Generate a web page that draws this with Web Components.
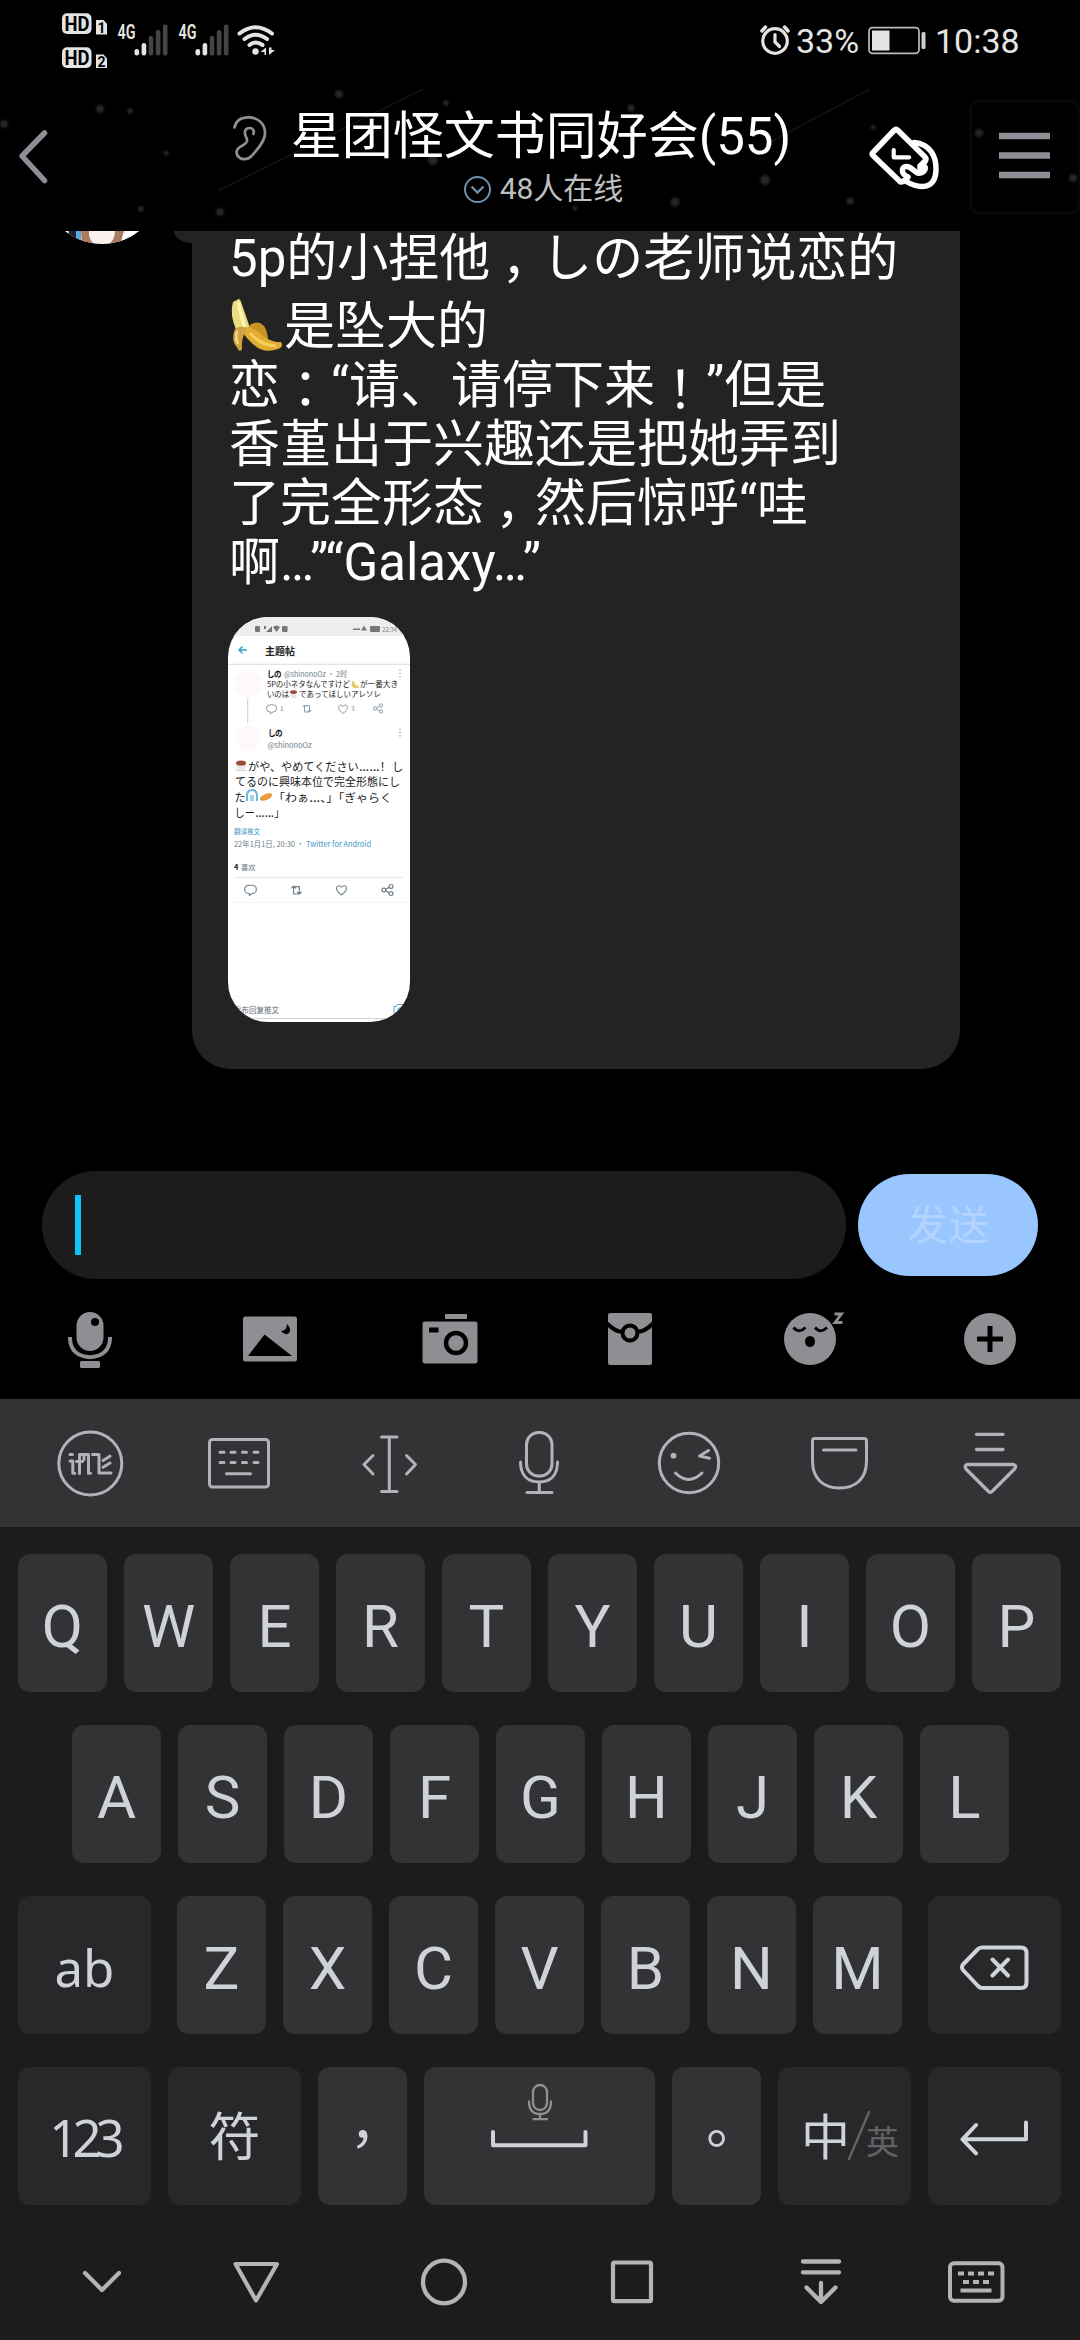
<!DOCTYPE html>
<html lang="zh-CN">
<head>
<meta charset="utf-8">
<title>群聊</title>
<style>
html,body{margin:0;padding:0;background:#000}
body{width:1080px;height:2340px;overflow:hidden;font-family:Roboto,"Noto Sans CJK SC",sans-serif}
</style>
</head>
<body>
<chat-app></chat-app>
<script>
const define = (name, html) => customElements.define(name, class extends HTMLElement {
  constructor() {
    super();
    this.attachShadow({mode: 'open'}).innerHTML = html;
  }
});

/* Icon set: [viewBox, markup]; the view box size is the drawn size. */
const ICONS = {
  signals: ['60 0 220 80', `
    <g fill="#e4e4e4"><rect x="62" y="13.3" width="29.5" height="20.6" rx="5"/><rect x="62" y="47.3" width="29.5" height="20.6" rx="5"/>
    <path d="M96 20h7.500l3.500 4v10.500h-11zM96 54.500h7.500l3.500 4v9.500h-11z"/></g>
    <g font-family="Roboto" font-weight="700" fill="#000"><text x="64.500" y="31" font-size="20" textLength="25" lengthAdjust="spacingAndGlyphs">HD</text><text x="64.500" y="65" font-size="20" textLength="25" lengthAdjust="spacingAndGlyphs">HD</text>
    <text x="97.500" y="33" font-size="14">1</text><text x="97.500" y="67" font-size="14">2</text></g>
    <g font-family="Roboto" font-weight="600" fill="#e4e4e4" font-size="20"><text x="117.500" y="38.500" textLength="18" lengthAdjust="spacingAndGlyphs">4G</text><text x="178.500" y="38.500" textLength="18" lengthAdjust="spacingAndGlyphs">4G</text></g>
    <g id="b"><g fill="#e4e4e4"><rect x="134.500" y="49" width="4.600" height="6.500" rx="2.200"/><rect x="141.600" y="43" width="4.600" height="12.500" rx="2.200"/></g>
    <g fill="#444"><rect x="148.700" y="36" width="4.600" height="19.500" rx="2"/><rect x="155.800" y="30" width="4.600" height="25.500" rx="2"/><rect x="162.900" y="24.500" width="4.600" height="31" rx="2"/></g></g>
    <use href="#b" x="61"/>
    <g fill="none" stroke="#e4e4e4" stroke-width="4" stroke-linecap="round"><path d="M239.500 33.500q16-12.500 32.500 0M244.500 39q11-8.500 22.500 0M249.500 45q6-5 13 0"/></g>
    <circle cx="255.500" cy="51.500" r="3.200" fill="#e4e4e4"/><path d="M266 47.500v7.500h-1.500v-3h-4zM269 47.500v7.500l6-5h-3.500v-2.500z" fill="#e4e4e4"/>`],
  alarm: ['758 20 34 40', `<g fill="none" stroke="#e4e4e4" stroke-linecap="round"><circle cx="774" cy="41" r="12.300" stroke-width="3.200"/><path d="M774 34.500v7.500l4.500 4.500" stroke-width="3.200"/><path d="M761 31l3.500-4M787 31l-3.500-4" stroke-width="3.500"/></g>`],
  battery: ['865 20 64 40', `<rect x="868" y="27.700" width="50" height="25.600" rx="3.500" fill="none" stroke="#bbb" stroke-width="1.700"/><rect x="871" y="30.500" width="17.500" height="20" fill="#e4e4e4"/><rect x="920.500" y="32" width="4" height="17" rx="1.500" fill="#ccc"/>`],
  back: ['0 80 226 151', `<path d="M44.500 133L22 156l22.500 24.500" fill="none" stroke="#8e8e96" stroke-width="5.500" stroke-linecap="round" stroke-linejoin="round"/>`],
  ear: ['226 80 65 151', `<g fill="none" stroke="#8e8e93" stroke-width="2.700" stroke-linecap="round"><path d="M234.500 127.500C236 120 242 117.300 248.500 117.300C258 117.300 265.500 124 265 134C264.500 142 257 150 251.500 156C247.500 160.500 240 160 237.500 155.500C235 151 238 147.500 242.500 145.500C247.500 143 248 140.500 246 137C243.500 131.500 245.500 128 249.500 128C253 128 254.500 130.500 253.500 134"/></g>`],
  chevron: ['463 174 30 30', `<g fill="none" stroke="#7190ad" stroke-width="2"><circle cx="477.500" cy="189.500" r="12.500"/><path d="M471.500 186.500l6 6 6-6" stroke-width="2.300"/></g>`],
  tag: ['791 80 169 151', `<g fill="none" stroke="#fff" stroke-width="5.500" stroke-linejoin="round" stroke-linecap="round"><path d="M903 181.500L900.500 182L873 155.500Q871.500 154 873 152.500L894 130.500Q896 128.500 898 130.500L924.500 156.500Q927 159 925 161.500"/><path d="M914 142.500C930 144 936.500 156 936 170C935.500 188 922 191 904.500 180.500"/><path d="M905 180L908 177C899 173 902 164 909 167C915 170 917 176 923 172C928 168 924 163 920 168M925 161L920 166"/><path d="M893.700 150v7.300h15.500" stroke-width="4.200"/></g>`],
  menu: ['960 80 120 151', `<rect x="970.500" y="101" width="109" height="112" rx="10" fill="none" stroke="#08080a" stroke-width="3"/><path d="M999 136h51M999 155.500h51M999 175h51" stroke="#8e8e96" stroke-width="6.300"/>`],
  banana: ['230 300 55 56', `<path d="M238 303q3-3 4 2q5 14 9 26l-2 6-11-2q-8-18-4-30z" fill="#eddc83"/><path d="M239.500 305q3 17 7 27" stroke="#fff3b0" stroke-width="3.500" fill="none"/><path d="M252 327q14-6 17 14l-4 5q-12-3-17-14z" fill="#c99422"/><path d="M246 330q9 0 18 9q10 7 18 6q3 5-3 7q-14 5-24-4q-9-8-12-14z" fill="#e0ad32"/><path d="M251 336q10 12 26 13" stroke="#f4cf5c" stroke-width="3" fill="none"/><path d="M236 332q7-5 12 0q-6 9-5 20q-2 4-4 0q-8-9-3-20z" fill="#d1a340"/><path d="M238 334q-2 7 1 13" stroke="#eddb8b" stroke-width="2.500" fill="none"/>`],
  voice: ['0 1279 180 120', `<rect x="76.500" y="1312" width="27" height="39" rx="13.500" fill="#8e8e93"/><path d="M70 1337v2q1 17 20 18.200q19-1.200 20-18.200v-2" fill="none" stroke="#8e8e93" stroke-width="4"/><rect x="80" y="1361" width="20" height="7" rx="1.500" fill="#8e8e93"/><circle cx="95" cy="1322" r="4" fill="#000"/>`],
  photo: ['180 1279 180 120', `<rect x="243" y="1316.500" width="54" height="45" rx="2.500" fill="#8e8e93"/><path d="M248 1356l16.500-21.500L292 1356zM287 1324q5 5 2 9q-4 3-8-2q6 0 6-7z" fill="#000"/>`],
  camera: ['360 1279 180 120', `<path d="M445 1314h22v5h-22zM425 1321.500h50q2.500 0 2.500 2.500v37q0 2.500-2.500 2.500h-50q-2.500 0-2.500-2.500v-37q0-2.500 2.500-2.500z" fill="#8e8e93"/><path d="M429 1327.500h9.500v5h-9.500z" fill="#000"/><circle cx="456" cy="1343" r="10" fill="#8e8e93" stroke="#000" stroke-width="4.500"/>`],
  envelope: ['540 1279 180 120', `<rect x="608" y="1313" width="44" height="52" rx="2" fill="#8e8e93"/><path d="M607 1323.500q8 8 15.500 8.500M653 1323.500q-8 8-15.500 8.500" fill="none" stroke="#000" stroke-width="4"/><circle cx="630" cy="1333" r="7.500" fill="#8e8e93" stroke="#000" stroke-width="4"/>`],
  sleepy: ['720 1279 180 120', `<circle cx="810" cy="1339" r="26" fill="#8e8e93"/><g fill="none" stroke="#000" stroke-width="2.800"><path d="M793.500 1327.500q5.500 6.500 12 0M815 1327.500q5.500 6.500 12 0"/></g><ellipse cx="810" cy="1341.500" rx="5" ry="5.500" fill="#000"/><path d="M834.500 1314h7l-6.500 8.500h7.500" fill="none" stroke="#8e8e93" stroke-width="2.800"/>`],
  plus: ['900 1279 180 120', `<circle cx="990" cy="1339" r="26" fill="#8e8e93"/><path d="M990 1326v26M977 1339h26" stroke="#000" stroke-width="5"/>`],
  logo: ['15 1399 150 128', `<g fill="none" stroke="#b1b3ba" stroke-width="3" stroke-linecap="round" stroke-linejoin="round"><circle cx="90.300" cy="1463.500" r="31.500"/><path d="M70 1454.500h2.500M70 1461h2.800v12.300h2M79.500 1473.500v-19h9v18.800h2M76.500 1461.500h6M84 1454.500v5M92.500 1454.500h6.500v18.500h12M103 1460.500l7-4.300M103 1467.300l7-4.300"/></g>`],
  kbd: ['165 1399 150 128', `<g fill="none" stroke="#b1b3ba" stroke-width="3" stroke-linecap="round"><rect x="209.500" y="1439.500" width="59" height="47.500" rx="3"/><path d="M220 1452.300h4M231 1452.300h4M242.500 1452.300h4M254 1452.300h4M220 1462.500h4M231 1462.500h4M242.500 1462.500h4M254 1462.500h4M226.500 1473.800h24"/></g>`],
  caret: ['315 1399 150 128', `<path d="M381.500 1437h15.500M381.500 1491.500h15.500M389.300 1437v54.500M373 1455.500l-9 9 9 9.500M406.500 1455.500l9 9-9 9.500" fill="none" stroke="#b1b3ba" stroke-width="3" stroke-linecap="round" stroke-linejoin="round"/>`],
  mic: ['465 1399 150 128', `<g fill="none" stroke="#b1b3ba" stroke-width="3" stroke-linecap="round"><rect x="526.500" y="1432.500" width="25.500" height="43.500" rx="12"/><path d="M520.500 1462c0 14 8 20 18.700 20s18.300-6 18.300-20M539.300 1482v10.500M527 1492.500h25"/></g>`],
  wink: ['615 1399 150 128', `<g fill="none" stroke="#b1b3ba" stroke-width="3" stroke-linecap="round" stroke-linejoin="round"><circle cx="689" cy="1463" r="29.700"/><path d="M675.500 1473q13 13 26.500 0M708.500 1450.500l-9 5.500 10 2.200"/></g><circle cx="673.500" cy="1455.700" r="2.900" fill="#b1b3ba"/>`],
  pocket: ['765 1399 150 128', `<path d="M814.500 1438.500h49.500q2.500 0 2.500 2.500v20c0 18-11 27-27 27s-27-9-27-27v-20q0-2.500 2-2.500zM823.500 1450h32.500" fill="none" stroke="#b1b3ba" stroke-width="3" stroke-linecap="round"/>`],
  collapse: ['915 1399 150 128', `<path d="M976.500 1434.300h26.500M976.500 1449.500h26.500M967 1464.500h46.500q3.500 1 1 4.500l-22.500 22.500q-1.700 1.500-3.500 0l-22.500-22.500q-2-3.500 1-4.500z" fill="none" stroke="#b1b3ba" stroke-width="3.300" stroke-linecap="round" stroke-linejoin="round"/>`],
  erase: ['928 1896 133 138', `<path d="M982 1947.500h39q5.500 0 5.500 5.500v29.500q0 5.500-5.500 5.500h-39q-2 0-4-2l-15-16q-2-2.700 0-5.500l14.500-15q2-2 4.500-2zM992.500 1959.500l15.500 16M1008 1959.500l-15.500 16" fill="none" stroke="#ced2d9" stroke-width="4" stroke-linecap="round" stroke-linejoin="round"/>`],
  enter: ['928 2067 133 138', `<path d="M1026 2122.500v16.800h-63M976 2125l-13.500 14.300 13.500 14" fill="none" stroke="#ced2d9" stroke-width="4" stroke-linecap="round" stroke-linejoin="round"/>`],
  space: ['424 2067 231 138', `<g fill="none" stroke-linecap="round" stroke-linejoin="round"><path d="M493 2132v13.200h92.500v-13.200" stroke="#ced2d9" stroke-width="4"/><g stroke="#909092" stroke-width="2.300"><rect x="533" y="2085" width="14" height="25" rx="7"/><path d="M529 2101.500c0 9 4 12.500 11 12.500s11-3.500 11-12.500M540 2114v5M533.500 2119.200h13.500"/></g></g>`],
  navhide: ['72 2221 60 119', `<path d="M85 2273l17 17 17-17" fill="none" stroke="#b5b4b5" stroke-width="4.200" stroke-linecap="round" stroke-linejoin="round"/>`],
  navback: ['226 2221 60 119', `<path d="M235.500 2264h41.500l-21 36.500z" fill="none" stroke="#b5b4b5" stroke-width="4.200" stroke-linejoin="round"/>`],
  navhome: ['414 2221 60 119', `<ellipse cx="444" cy="2282" rx="21" ry="21.300" fill="none" stroke="#b5b4b5" stroke-width="4.300"/>`],
  navrecent: ['602 2221 60 119', `<rect x="613" y="2262.500" width="38" height="38.700" rx="1.500" fill="none" stroke="#b5b4b5" stroke-width="4.200"/>`],
  navdown: ['791 2221 60 119', `<path d="M803 2261.500h36M803 2272.300h36M821 2283v19M806.500 2287.500l14.500 14.500 14.500-14.500" fill="none" stroke="#b5b4b5" stroke-width="4.300" stroke-linecap="round" stroke-linejoin="round"/>`],
  navkbd: ['946 2221 60 119', `<rect x="950" y="2263.300" width="52.500" height="37.500" rx="4" fill="none" stroke="#b5b4b5" stroke-width="4"/><path d="M958 2273.500h6M968 2273.500h6M978 2273.500h6M988 2273.500h6M963 2282h6M973 2282h6M983 2282h6M960.500 2290.500h31" stroke="#b5b4b5" stroke-width="4"/>`],
};
customElements.define('ui-icon', class extends HTMLElement {
  connectedCallback() {
    const [box, body] = ICONS[this.getAttribute('name')];
    const [, , w, h] = box.split(' ');
    if (!this.shadowRoot) this.attachShadow({mode: 'open'});
    this.shadowRoot.innerHTML = `<style>:host{display:block;flex:none;width:${w}px;height:${h}px}svg{display:block}</style><svg width="${w}" height="${h}" viewBox="${box}">${body}</svg>`;
  }
});

define('status-bar', `<style>
:host{display:flex;height:80px;padding:0 60px;box-sizing:border-box;color:#e4e4e4;font-size:34px;line-height:40px}
.right{display:flex;margin-left:auto;margin-top:20px;height:40px;align-items:flex-start}
span{display:block;padding-top:1px}
.pct{width:70px;margin-left:3px}.time{width:85px;margin-left:5px}
</style><ui-icon name="signals"></ui-icon>
<div class="right"><ui-icon name="alarm"></ui-icon><span class="pct">33%</span><ui-icon name="battery"></ui-icon><span class="time">10:38</span></div>`);

define('chat-header', `<style>
:host{display:flex;position:relative;height:151px;background:#000;z-index:0}
.sky{position:absolute;inset:0;z-index:-1}
.mid{width:500px;display:flex;flex-direction:column;align-items:center;padding-top:27px;box-sizing:border-box;gap:4px;white-space:nowrap}
.t{font-size:51px;line-height:60px;color:#fff}
.s{display:flex;align-items:center;gap:7px;font-size:30px;line-height:36px;color:#bfbfbf;padding-left:4px}
</style>
<svg class="sky" width="1080" height="151" viewBox="0 80 1080 151"><defs><filter id="f"><feGaussianBlur stdDeviation="1.200"/></filter></defs>
<path d="M218 191L423 89M770 142L870 89" stroke="#111315" stroke-width="1.500"/>
<g fill="#252525" filter="url(#f)"><circle cx="100" cy="109" r="4"/><circle cx="130" cy="111" r="3"/><circle cx="4" cy="124" r="4"/><circle cx="339" cy="94" r="4"/><circle cx="446" cy="103" r="3"/><circle cx="433" cy="160" r="5"/><circle cx="220" cy="212" r="4"/><circle cx="166" cy="153" r="2.500"/><circle cx="141" cy="209" r="3"/><circle cx="631" cy="108" r="3.500"/><circle cx="765" cy="180" r="5"/><circle cx="675" cy="202" r="4.500"/><circle cx="575" cy="208" r="2.500"/><circle cx="850" cy="201" r="3.500"/><circle cx="873" cy="127" r="2.500"/><circle cx="979" cy="133" r="4"/><circle cx="1073" cy="178" r="4"/></g></svg>
<ui-icon name="back"></ui-icon><ui-icon name="ear"></ui-icon>
<div class="mid"><div class="t"><slot name="title"></slot></div><div class="s"><ui-icon name="chevron"></ui-icon><slot name="online"></slot></div></div>
<ui-icon name="tag"></ui-icon><ui-icon name="menu"></ui-icon>`);

define('user-avatar', `<style>:host{display:block;width:174px;height:20px}</style>
<svg width="174" height="20" viewBox="0 231 174 20"><defs><clipPath id="c"><circle cx="102" cy="185" r="59"/></clipPath></defs>
<g clip-path="url(#c)"><rect x="40" y="225" width="130" height="25" fill="#fbf1ee"/><path d="M62 225h6v10z" fill="#fff"/><path d="M68 229h8v9h-6z" fill="#221c35"/><path d="M76 231h5v13h-5z" fill="#58a9dc"/><path d="M81 231h8q-1 8 6 14H82zM115 231h9q1 8-7 14h-10q8-4 8-14z" fill="#a97960"/><path d="M124 231h16v14h-20z" fill="#fff"/></g></svg>`);

define('shared-screenshot', `<style>:host{display:block;width:182px;height:405px;border-radius:40px;overflow:hidden;background:#fff}svg{display:block}text{font-family:"Noto Sans CJK JP",sans-serif}.d{font-family:Roboto;font-size:16px}</style>
<svg width="182" height="405" viewBox="0 0 182 405">
<defs>
<g id="cm"><path d="M-1.500-3.700h3a3.600 3.600 0 0 1 0 7.200L-1 5.200V3.500h-.5a3.600 3.600 0 0 1 0-7.200z"/></g>
<g id="rt"><path d="M-4.500-1.500l2-2 2 2M-2.500-3v6.500h4.500M4.500 1.500l-2 2-2-2M2.500 3.500v-6.500h-4"/></g>
<g id="ht"><path d="M0 4.500C-8-1-3.500-6.500 0-2.500C3.500-6.500 8-1 0 4.500z"/></g>
<g id="sh"><circle cx="-3" cy="0" r="1.600"/><circle cx="3" cy="-3" r="1.600"/><circle cx="3" cy="3" r="1.600"/><path d="M-1.500-.7l3-1.700M-1.500.7l3 1.700"/></g>
<g id="cup"><path d="M0 3h10q0 8-5 8t-5-8z" fill="#eee6e4"/><ellipse cx="5" cy="3" rx="5" ry="2.600" fill="#9a4c39"/><path d="M-.5 10.500h11" stroke="#d8d2d2"/></g>
</defs>
<rect width="182" height="19" fill="#ededed"/>
<g fill="#777"><rect x="27" y="9" width="5" height="6" rx="1"/><path d="M36 9h2v3h-2zM38 15l6-6v6z"/><path d="M45 10q3.500-3 7 0l-3.500 5z"/><rect x="54" y="9" width="5.500" height="6" rx="1"/><path d="M125 11.500h7v1.500h-7zM136 8.500l3 5h-6z"/><rect x="142" y="9" width="10" height="6" rx="1"/></g>
<text x="154" y="15" font-size="6.500" textLength="15" fill="#888">22:34</text>
<path d="M19 33h-8M14.500 29.500L11 33l3.500 3.500" stroke="#3c9fd4" stroke-width="1.500" fill="none"/>
<text x="37" y="37.500" font-size="10" font-weight="700" textLength="30" fill="#222">主题帖</text>
<path d="M0 47.300h182" stroke="#ddd"/>
<circle cx="20" cy="67" r="13" fill="#fdf8fc"/><path d="M19.700 82v24" stroke="#ccd2d6" stroke-width="1.200"/>
<text x="39" y="60" font-size="7.500" font-weight="700" fill="#111" textLength="14.500">しの</text><text x="56" y="59.500" font-size="7.500" fill="#6d7b86" textLength="63" lengthAdjust="spacingAndGlyphs">@shinonoOz · 2时</text>
<text x="39" y="70" font-size="8" fill="#222" textLength="83" lengthAdjust="spacingAndGlyphs">5Pの小ネタなんですけど</text><path d="M125 64q1 5 6 6q-6 2-7-2z" fill="#eac65a" stroke="#eac65a"/><text x="132" y="70" font-size="8" fill="#222" textLength="38" lengthAdjust="spacingAndGlyphs">が一番大き</text>
<text x="39" y="80" font-size="8" fill="#222" textLength="22" lengthAdjust="spacingAndGlyphs">いのは</text><use href="#cup" transform="translate(62 73) scale(.7)"/><text x="71" y="80" font-size="8" fill="#222" textLength="82" lengthAdjust="spacingAndGlyphs">であってほしいアレソレ</text>
<g fill="none" stroke="#80909c" stroke-width=".9"><use href="#cm" x="43.500" y="91.500"/><use href="#rt" x="79" y="91.500"/><use href="#ht" x="115" y="92"/><use href="#sh" x="150" y="91.500"/></g>
<text x="52" y="94" font-size="6.500" fill="#80909c">1</text><text x="123" y="94" font-size="6.500" fill="#80909c">3</text>
<g fill="#9aa4ac"><circle cx="172" cy="53" r=".8"/><circle cx="172" cy="56.500" r=".8"/><circle cx="172" cy="60" r=".8"/><circle cx="172" cy="112" r=".8"/><circle cx="172" cy="115.500" r=".8"/><circle cx="172" cy="119" r=".8"/></g>
<circle cx="20" cy="121" r="13" fill="#fdf8fc"/>
<text x="40" y="118.500" font-size="7.500" font-weight="700" fill="#111" textLength="14.500">しの</text>
<text x="39.500" y="131" font-size="7.500" fill="#6d7b86" textLength="44" lengthAdjust="spacingAndGlyphs">@shinonoOz</text>
<g font-size="11.300" fill="#1c1c1c"><use href="#cup" x="8" y="143"/><text x="20" y="153.500" textLength="143" lengthAdjust="spacingAndGlyphs">がや、やめてください<tspan class="d">……</tspan>！</text><text x="164" y="153.500">し</text>
<text x="7" y="169" textLength="165" lengthAdjust="spacingAndGlyphs">てるのに興味本位で完全形態にし</text>
<text x="6.500" y="184.500">た</text><path d="M19 184v-5q0-6 5-6t5 6v5" fill="none" stroke="#6fb6dc" stroke-width="2"/><path d="M22 178h4v6h-4z" fill="#9fd3ee"/><ellipse cx="38" cy="180" rx="6.500" ry="3" fill="#e79b3c" transform="rotate(-22 38 180)"/><text x="45" y="184.500" textLength="119" lengthAdjust="spacingAndGlyphs">「わぁ<tspan class="d">…</tspan>、」「ぎゃらく</text>
<text x="6.500" y="200" textLength="50" lengthAdjust="spacingAndGlyphs">しー<tspan class="d">……</tspan>」</text></g>
<text x="6" y="216.500" font-size="6.500" fill="#3795c4" textLength="26">翻译推文</text>
<text x="6" y="230.300" font-size="7.500" fill="#6d7b86" textLength="70" lengthAdjust="spacingAndGlyphs">22年1月1日, 20:30 ·</text><text x="78" y="230.300" font-size="7.500" fill="#3795c4" textLength="65" lengthAdjust="spacingAndGlyphs">Twitter for Android</text>
<text x="6" y="252.500" font-size="7.500" font-weight="700" fill="#222">4</text><text x="13" y="252.500" font-size="7.300" fill="#6d7b86">喜欢</text>
<path d="M6 260.300h169" stroke="#e2e5e8"/><path d="M0 285.300h182" stroke="#f1f3f4"/><path d="M0 379h182" stroke="#fafafa"/>
<g fill="none" stroke="#71808c"><use href="#cm" transform="translate(22.500 272.500) scale(1.150)"/><use href="#rt" transform="translate(68.500 273) scale(1.150)"/><use href="#ht" transform="translate(113.500 273) scale(1.100)"/><use href="#sh" transform="translate(159.500 273) scale(1.200)"/></g>
<text x="6" y="396" font-size="7.500" fill="#5d6b76">发布回复推文</text>
<path d="M166 389.500h2l1.500-2h5l1.500 2h2.500v9.500h-12.500z" fill="none" stroke="#4f9fc4"/><circle cx="172" cy="393.500" r="2.500" fill="none" stroke="#4f9fc4"/>
<path d="M0 401.500h182" stroke="#d0d3d5"/></svg>`);

define('message-bubble', `<style>
:host{display:block;width:768px;height:838px;box-sizing:border-box;padding:0 36px;border-radius:0 0 38px 38px;background:#232323;color:#fff;font-size:51px;line-height:59px;white-space:nowrap}
::slotted([slot=image]){margin-top:25px}
</style><slot></slot><slot name="image"></slot>`);

define('message-text', `<style>
:host{display:block;margin-top:-2px;padding-left:1px}
div{height:59px}.e{display:flex;padding-top:9px}
.c,.m{display:inline-block;width:51px;font-family:"Noto Sans CJK TC";height:59px;vertical-align:top}
.m{line-height:61px}.c{line-height:84px;text-indent:-2px}
</style>
<div>5p的小捏他<span class="c">，</span>しの老师说恋的</div>
<div class="e"><ui-icon name="banana"></ui-icon>是坠大的</div>
<div>恋<span class="m">：</span>“请、请停下来<span class="m">！</span>”但是</div>
<div>香堇出于兴趣还是把她弄到</div>
<div>了完全形态<span class="c">，</span>然后惊呼“哇</div>
<div>啊…”“Galaxy…”</div>`);

define('chat-log', `<style>
:host{display:flex;height:940px;overflow:hidden;background:#000}
.tail{width:18px;height:12px;background:#232323;border-bottom-left-radius:18px 12px}
</style><user-avatar></user-avatar><div class="tail"></div><slot></slot>`);

define('message-input', `<style>
:host{display:flex;align-items:center;gap:12px;height:108px;padding:0 42px}
.f{flex:1;height:108px;border-radius:54px;background:#1c1c1c;display:flex;align-items:center;padding-left:33px;box-sizing:border-box}
i{width:6px;height:60px;background:#0cc4f8}
button{all:unset;width:180px;height:102px;border-radius:51px;background:#99c6ff;color:#b2d4ff;font-size:41px;line-height:104px;text-align:center}
</style><div class="f"><i></i></div><button>发送</button>`);

define('chat-tools', `<style>:host{display:flex;height:120px}</style>
<ui-icon name="voice"></ui-icon><ui-icon name="photo"></ui-icon><ui-icon name="camera"></ui-icon><ui-icon name="envelope"></ui-icon><ui-icon name="sleepy"></ui-icon><ui-icon name="plus"></ui-icon>`);

define('key-cap', `<style>
:host{display:flex;justify-content:center;align-items:center;flex:none;width:89px;height:138px;border-radius:12px;background:#333335;color:#ced2d9;font-size:60px;line-height:70px;overflow:hidden}
:host(:not([wide]):not([space]):not([punct])) span{padding-top:7px}
:host([wide]){width:133px;background:#28282a;font-size:51px}
:host([space]){width:231px}
:host([punct]){font-family:"Noto Sans CJK TC";font-size:54px}
span{display:flex;align-items:center}
</style><span><slot></slot></span>`);

customElements.define('key-row', class extends HTMLElement {
  connectedCallback() {
    const keys = [...(this.getAttribute('keys') || '')].map(k => `<key-cap>${k}</key-cap>`).join('');
    if (!this.shadowRoot) this.attachShadow({mode: 'open'});
    this.shadowRoot.innerHTML = `<style>:host{display:flex;justify-content:space-between;padding:0 19px 0 18px}:host([inset]){padding:0 71px 0 72px}div{display:flex;gap:17px}</style><slot name="start"></slot><div>${keys}<slot></slot></div><slot name="end"></slot>`;
  }
});

define('soft-keyboard', `<style>
:host{display:block;height:822px;background:#1c1c1e}
.bar{display:flex;height:128px;padding:0 15px;background:#333335}
.keys{display:flex;flex-direction:column;gap:33px;padding-top:27px}
.ab{font-family:"Noto Sans";padding-top:3px}
.num{font-family:"Noto Sans";letter-spacing:-6px;padding-right:1px;padding-top:2px}
.fu{font-size:52px;padding-top:6px}
.zh{font-size:49px;padding-left:25px;padding-top:5px}
.en{font-size:33px;color:#626264;padding-top:13px;padding-right:14px;margin-left:-4px}
svg{display:block;flex:none;margin:0 -1px 0 -3px}
</style>
<div class="bar"><ui-icon name="logo"></ui-icon><ui-icon name="kbd"></ui-icon><ui-icon name="caret"></ui-icon><ui-icon name="mic"></ui-icon><ui-icon name="wink"></ui-icon><ui-icon name="pocket"></ui-icon><ui-icon name="collapse"></ui-icon></div>
<div class="keys">
<key-row keys="QWERTYUIOP"></key-row>
<key-row keys="ASDFGHJKL" inset></key-row>
<key-row keys="ZXCVBNM"><key-cap slot="start" wide><span class="ab">ab</span></key-cap><key-cap slot="end" wide><ui-icon name="erase"></ui-icon></key-cap></key-row>
<key-row><key-cap wide><span class="num">123</span></key-cap><key-cap wide><span class="fu">符</span></key-cap><key-cap punct>，</key-cap><key-cap space><ui-icon name="space"></ui-icon></key-cap><key-cap punct>。</key-cap><key-cap wide><span class="zh">中</span><svg width="24" height="50" viewBox="0 0 24 50"><path d="M22 1L2 48" stroke="#626264" stroke-width="2.500" stroke-linecap="round"/></svg><span class="en">英</span></key-cap><key-cap wide><ui-icon name="enter"></ui-icon></key-cap></key-row>
</div>`);

define('nav-bar', `<style>
:host{display:flex;height:119px;background:#1d1b1d;padding-left:72px}
.a{margin-left:94px}.b{margin-left:128px}.c{margin-left:129px}.d{margin-left:95px}
</style><ui-icon name="navhide"></ui-icon><ui-icon class="a" name="navback"></ui-icon><ui-icon class="b" name="navhome"></ui-icon><ui-icon class="b" name="navrecent"></ui-icon><ui-icon class="c" name="navdown"></ui-icon><ui-icon class="d" name="navkbd"></ui-icon>`);

define('chat-app', `<style>:host{display:flex;flex-direction:column;width:1080px;height:2340px;background:#000}</style>
<status-bar></status-bar>
<chat-header><span slot="title">星团怪文书同好会(55)</span><span slot="online">48人在线</span></chat-header>
<chat-log><message-bubble><message-text></message-text><shared-screenshot slot="image"></shared-screenshot></message-bubble></chat-log>
<message-input></message-input>
<chat-tools></chat-tools>
<soft-keyboard></soft-keyboard>
<nav-bar></nav-bar>`);
</script>
</body>
</html>
